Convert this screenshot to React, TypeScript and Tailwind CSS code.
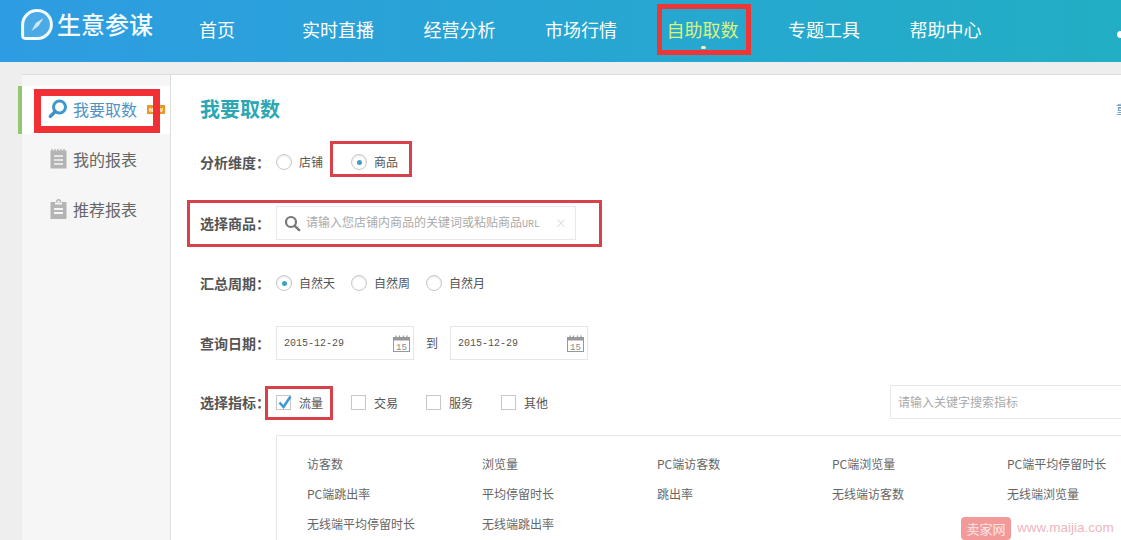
const CJK = '"Noto Sans CJK SC", "Liberation Sans", sans-serif';

function Logo() {
  return (
    <svg width="32" height="31" viewBox="0 0 32 31" className="shrink-0">
      <path d="M16.5 1.6a13.9 13.9 0 1 1 0 27.8H4a2.4 2.4 0 0 1-2.4-2.4V16A14.4 14.4 0 0 1 16.5 1.6z" fill="#ffffff" fillOpacity="0.14" stroke="#f2fbff" strokeWidth="3" />
      <path d="M22.5 9 17.5 17 10.5 22l4.3-8z" fill="#e6f5fd" opacity="0.85" />
    </svg>
  );
}

function BlueSearch() {
  return (
    <svg width="20" height="20" viewBox="0 0 20 20">
      <circle cx="11.5" cy="8" r="6" fill="none" stroke="#3f97cf" strokeWidth="3" />
      <path d="M7 12.8 2.4 17.4" stroke="#3f8fc4" strokeWidth="3.4" strokeLinecap="round" />
    </svg>
  );
}

function GreySearch() {
  return (
    <svg width="17" height="17" viewBox="0 0 17 17">
      <circle cx="7" cy="7" r="5" fill="none" stroke="#777" strokeWidth="2.2" />
      <path d="m10.8 10.8 4.4 4.4" stroke="#777" strokeWidth="2.4" strokeLinecap="round" />
    </svg>
  );
}

function NoteIcon() {
  return (
    <svg width="17" height="20" viewBox="0 0 17 20" className="shrink-0">
      <rect x="0.5" y="1.5" width="16" height="18" fill="#b4b4b4" />
      <path d="M2 0v3M5 0v3M8 0v3M11 0v3M14 0v3" stroke="#b4b4b4" strokeWidth="1.4" />
      <path d="M4 7h9M4 11h9M4 15h9" stroke="#f6f6f6" strokeWidth="1.6" />
    </svg>
  );
}

function ClipIcon() {
  return (
    <svg width="17" height="20" viewBox="0 0 17 20" className="shrink-0">
      <rect x="0.5" y="3" width="16" height="17" fill="#b4b4b4" />
      <circle cx="8.5" cy="2.8" r="2" fill="none" stroke="#b4b4b4" strokeWidth="1.4" />
      <rect x="5" y="3.5" width="7" height="2" fill="#f6f6f6" />
      <path d="M4 10h9M4 14h9" stroke="#f6f6f6" strokeWidth="1.8" />
    </svg>
  );
}

function CalendarIcon() {
  return (
    <svg width="17" height="17" viewBox="0 0 17 17" className="shrink-0">
      <rect x="0.5" y="2.5" width="16" height="14" fill="#fff" stroke="#999" />
      <rect x="0.5" y="2.5" width="16" height="3" fill="#999" />
      <path d="M3 0.5v3M6.5 0.5v3M10.5 0.5v3M14 0.5v3" stroke="#999" strokeWidth="1.2" />
      <text x="8.5" y="14.5" textAnchor="middle" fontSize="9" fill="#888" fontFamily="Liberation Mono, monospace">15</text>
    </svg>
  );
}

function Radio({ label, on }: { label: string; on?: boolean }) {
  return (
    <div className="flex w-[75px] shrink-0 items-center">
      <span className="flex h-4 w-4 items-center justify-center rounded-full border border-[#c8c8c8] bg-white shadow-[inset_0_1px_2px_#e4e4e4]">
        {on && <span className="h-[5px] w-[5px] rounded-full bg-[#3f9fc4]" />}
      </span>
      <span className="ml-[7px] text-xs text-[#555]">{label}</span>
    </div>
  );
}

function Check({ label, on }: { label: string; on?: boolean }) {
  return (
    <div className="flex w-[75px] shrink-0 items-center">
      <span className="relative flex h-[15px] w-[15px] items-center justify-center border border-[#c8c8c8] bg-white">
        {on && (
          <svg width="16" height="15" viewBox="0 0 16 15" className="absolute -top-px left-0">
            <path d="M2.5 7.5 6.5 12 13.5 1.5" fill="none" stroke="#3d9ad6" strokeWidth="2.6" />
          </svg>
        )}
      </span>
      <span className="ml-2 pt-px text-xs text-[#555]">{label}</span>
    </div>
  );
}

function Label({ children }: { children: string }) {
  return <div className="w-[76px] shrink-0 text-sm font-bold text-[#555]">{children}</div>;
}

function DateInput() {
  return (
    <div className="flex h-[34px] w-[138px] items-center justify-between border border-[#e6e6e6] bg-white pl-[7px] pr-[3px]">
      <span className="text-[10px] text-[#555]" style={{ fontFamily: '"Liberation Mono", monospace' }}>2015-12-29</span>
      <CalendarIcon />
    </div>
  );
}

const NAV = ['实时直播', '经营分析', '市场行情', '自助取数', '专题工具', '帮助中心'];
const METRICS = [
  '访客数', '浏览量', 'PC端访客数', 'PC端浏览量', 'PC端平均停留时长',
  'PC端跳出率', '平均停留时长', '跳出率', '无线端访客数', '无线端浏览量',
  '无线端平均停留时长', '无线端跳出率',
];

function RedBox({ className }: { className: string }) {
  return <div className={`pointer-events-none absolute ${className}`} />;
}

export default function App() {
  return (
    <div className="relative h-[540px] w-[1121px] overflow-hidden bg-[#eeeeee]" style={{ fontFamily: CJK }}>
      <header className="flex h-[62px] items-start bg-gradient-to-r from-[#2e9ce2] to-[#22aec4] text-white">
        <div className="ml-[21px] mt-[9px] flex w-[178px] shrink-0 items-start">
          <Logo />
          <span className="ml-[4px] text-2xl font-medium leading-[30px] text-[#f2fbff]">生意参谋</span>
        </div>
        <nav className="mt-[16px] flex items-center text-lg leading-[26px]">
          <span className="mr-[67px]">首页</span>
          <div className="flex gap-[49.5px]">
            {NAV.map((n) => (
              <span key={n} className={n === '自助取数' ? 'text-[#d9f27e]' : ''}>{n}</span>
            ))}
          </div>
        </nav>
      </header>

      <div className="ml-[22px] mt-3 flex h-[466px]">
        <aside className="flex w-[149px] shrink-0 flex-col border-r border-t border-[#dddddd] bg-[#f6f6f6] pt-[11px]">
          <div className="-ml-1 flex h-12 items-center border-l-4 border-[#93c671] bg-white pb-[2px] pl-[26px] text-base text-[#4f93c6]">
            <BlueSearch />
            <span className="ml-[5px]">我要取数</span>
          </div>
          <div className="flex h-[52px] items-center pb-[2px] pl-[28px] text-base text-[#666]">
            <NoteIcon />
            <span className="ml-[6px]">我的报表</span>
          </div>
          <div className="flex h-[48px] items-center pb-[2px] pl-[28px] text-base text-[#666]">
            <ClipIcon />
            <span className="ml-[6px]">推荐报表</span>
          </div>
        </aside>

        <main className="min-w-0 flex-1 border-t border-[#dddddd] bg-white pl-[29px] pt-[20px]">
          <div className="flex h-7 items-center justify-between">
            <h1 className="text-xl font-bold text-[#2ba8b4]">我要取数</h1>
            <span className="-mr-[19px] text-xs text-[#4f93c6]">重置</span>
          </div>

          <div className="mt-[22px] flex h-[34px] items-center">
            <Label>分析维度：</Label>
            <Radio label="店铺" />
            <Radio label="商品" on />
          </div>

          <div className="mt-[27px] flex h-[34px] items-center">
            <Label>选择商品：</Label>
            <div className="flex h-[34px] w-[300px] items-center border border-[#e8e8e8] bg-white pl-[7px] pr-[8px]">
              <GreySearch />
              <span className="ml-[5px] flex-1 text-xs text-[#aaaaaa]">
                请输入您店铺内商品的关键词或粘贴商品<span className="text-[10px]" style={{ fontFamily: '"Liberation Mono", monospace' }}>URL</span>
              </span>
              <span className="text-xs text-[#dddddd]">×</span>
            </div>
          </div>

          <div className="mt-[26px] flex h-[34px] items-center">
            <Label>汇总周期：</Label>
            <Radio label="自然天" on />
            <Radio label="自然周" />
            <Radio label="自然月" />
          </div>

          <div className="mt-[26px] flex h-[34px] items-center">
            <Label>查询日期：</Label>
            <DateInput />
            <span className="w-9 text-center text-xs text-[#555]">到</span>
            <DateInput />
          </div>

          <div className="mt-[25px] flex h-[34px] items-center">
            <Label>选择指标：</Label>
            <Check label="流量" on />
            <Check label="交易" />
            <Check label="服务" />
            <Check label="其他" />
            <div className="ml-auto flex h-[34px] w-[231px] items-center border-y border-l border-[#e8e8e8] pl-[7px] text-xs text-[#aaaaaa]">
              请输入关键字搜索指标
            </div>
          </div>

          <div className="-mr-5 ml-[76px] mt-4 grid h-[200px] grid-cols-[175px_175px_175px_175px_175px] content-start border border-[#e6e6e6] pl-[30px] pt-[13px]">
            {METRICS.map((m) => (
              <div key={m} className="h-[30px] whitespace-nowrap text-xs leading-[30px] text-[#666]">{m}</div>
            ))}
          </div>
        </main>
      </div>

      {/* overlays: nav marker, user icon, NEW badge, annotations, watermark */}
      <span className="absolute left-[701px] top-[46px] h-[3px] w-[5px] rounded-full bg-[#fff2b0]" />
      <span className="absolute left-[1117px] top-[31px] h-[7px] w-[8px] rounded-full bg-white" />
      <div className="absolute left-[147px] top-[105px] flex h-[9px] w-[18px] items-center justify-between bg-[#e8962e] px-[2px] text-[6px] font-bold leading-none text-white" style={{ fontFamily: '"Liberation Sans", sans-serif' }}>
        <span>N</span><span>E</span><span>W</span>
      </div>

      <RedBox className="left-[657px] top-[4px] h-[51px] w-[94px] border-[5px] border-[#ee3636]" />
      <RedBox className="left-[34px] top-[89px] h-[44px] w-[126px] border-[7px] border-[#f03034]" />
      <RedBox className="left-[330px] top-[141px] h-[36px] w-[82px] border-[3px] border-[#d8414a]" />
      <RedBox className="left-[187px] top-[200px] h-[47px] w-[415px] border-[3px] border-[#d8414a]" />
      <RedBox className="left-[265px] top-[386px] h-[34px] w-[68px] border-[3px] border-[#d8414a]" />

      <div className="absolute left-[961px] top-[517px] flex h-[23px] items-center">
        <span className="flex h-[23px] w-[50px] items-center justify-center rounded-sm bg-[#f29a9a] text-[13px] text-[#fde6e6]">卖家网</span>
        <span className="ml-[6px] text-[13.5px] text-[#f2b5c0]" style={{ fontFamily: '"Liberation Sans", sans-serif' }}>www.maijia.com</span>
      </div>
    </div>
  );
}
